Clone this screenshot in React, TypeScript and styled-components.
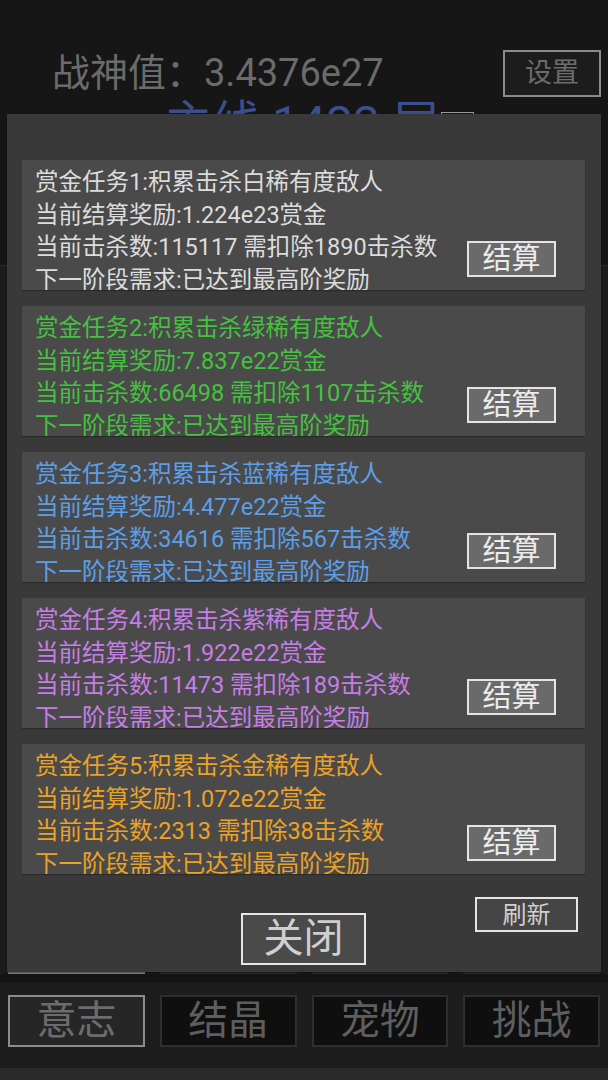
import React from "react";
import styled, { createGlobalStyle } from "styled-components";

const GlobalStyle = createGlobalStyle`
  html, body {
    margin: 0;
    padding: 0;
    background: #161616;
  }
  body {
    font-family: Roboto, "Noto Sans CJK SC", sans-serif;
  }
`;

type Task = {
  id: number;
  rarity: string;
  reward: string;
  kills: string;
  deduct: string;
  color: string;
};

const tasks: Task[] = [
  { id: 1, rarity: "白", reward: "1.224e23", kills: "115117", deduct: "1890", color: "#dcdcdc" },
  { id: 2, rarity: "绿", reward: "7.837e22", kills: "66498", deduct: "1107", color: "#45c13f" },
  { id: 3, rarity: "蓝", reward: "4.477e22", kills: "34616", deduct: "567", color: "#5c9fe8" },
  { id: 4, rarity: "紫", reward: "1.922e22", kills: "11473", deduct: "189", color: "#c67ee6" },
  { id: 5, rarity: "金", reward: "1.072e22", kills: "2313", deduct: "38", color: "#eba226" },
];

const tabs = ["意志", "结晶", "宠物", "挑战"];

const Screen = styled.div`
  position: relative;
  height: 1080px;
  display: flex;
  flex-direction: column;
  background: #161616;
  overflow: hidden;
`;

const Header = styled.div`
  display: flex;
  align-items: center;
  justify-content: space-between;
  padding: 50px 7px 0 52px;
  height: 47px;
`;

const Power = styled.div`
  font-size: 38px;
  color: #6b6b6b;
  line-height: 47px;
  white-space: nowrap;
`;

const SettingsButton = styled.div`
  width: 94px;
  height: 43px;
  border: 2px solid #8a8a8a;
  background: #1c1c1c;
  color: #6c6c6c;
  font-size: 27px;
  line-height: 1;
  display: flex;
  align-items: center;
  justify-content: center;
`;

const Floor = styled.div`
  display: flex;
  justify-content: center;
  align-items: flex-start;
  gap: 1px;
  font-size: 48px;
  line-height: 54px;
  color: #3b4f8f;
  padding-left: 30px;
`;

const SmallBox = styled.div`
  width: 31px;
  height: 30px;
  margin-top: 15px;
  border: 1px solid #9a9a9a;
`;

const Content = styled.div`
  flex: 1;
  margin-top: 114px;
  border-top: 1px solid #2a2a2a;
  background: #1c1c1c;
  display: flex;
  flex-direction: column;
  justify-content: flex-end;
`;

const TabRow = styled.div`
  display: grid;
  grid-template-columns: repeat(4, 1fr);
  gap: 15px;
  padding: 0 8px;
`;

const Tab = styled.div<{ $active?: boolean }>`
  height: 48px;
  border: 2px solid ${(p) => (p.$active ? "#8c8c8c" : "#2e2e2e")};
  background: ${(p) => (p.$active ? "#262626" : "#0f0f0f")};
  color: ${(p) => (p.$active ? "#6c6c6c" : "#5e5e5e")};
  font-size: 40px;
  line-height: 1;
  display: flex;
  align-items: center;
  justify-content: center;
`;

const Gap = styled.div`
  height: 8px;
  background: #141414;
`;

const NavBar = styled.div`
  background: #1d1d1d;
  padding: 13px 0 21px;
`;

const BottomStrip = styled.div`
  height: 12px;
  background: #2a2a2a;
`;

const Modal = styled.div`
  position: absolute;
  top: 114px;
  left: 7px;
  width: 594px;
  height: 858px;
  background: #393939;
  box-shadow: 0 1px 2px rgba(0, 0, 0, 0.5);
  display: flex;
  flex-direction: column;
  box-sizing: border-box;
  padding-top: 46px;
`;

const CardList = styled.div`
  display: flex;
  flex-direction: column;
  gap: 16px;
  padding: 0 16px 0 15px;
`;

const Card = styled.div<{ $color: string }>`
  height: 130px;
  box-sizing: border-box;
  background: #4a4a4a;
  padding: 6px 0 0 13px;
  overflow: hidden;
  display: flex;
  justify-content: space-between;
  color: ${(p) => p.$color};
  box-shadow: 0 1px 1px rgba(0, 0, 0, 0.25);
`;

const Lines = styled.div`
  font-size: 23.5px;
  line-height: 32.5px;
  white-space: nowrap;
`;

const SettleButton = styled.div`
  align-self: flex-end;
  margin: 0 29px 13px 0;
  width: 85px;
  height: 32px;
  border: 2px solid #e4e4e4;
  background: #6a6a6a;
  color: #ececec;
  font-size: 29px;
  line-height: 1;
  display: flex;
  align-items: center;
  justify-content: center;
  flex-shrink: 0;
`;

const Footer = styled.div`
  flex: 1;
  display: grid;
  grid-template-columns: 1fr auto 1fr;
  padding: 0 23px 7px 22px;
`;

const CloseButton = styled.div`
  grid-column: 2;
  align-self: end;
  width: 121px;
  height: 48px;
  border: 2px solid #e6e6e6;
  background: #4a4a4a;
  color: #cfcfcf;
  font-size: 40px;
  line-height: 1;
  display: flex;
  align-items: center;
  justify-content: center;
`;

const RefreshButton = styled.div`
  grid-column: 3;
  align-self: start;
  justify-self: end;
  margin-top: 23px;
  width: 99px;
  height: 31px;
  border: 2px solid #e4e4e4;
  background: #454545;
  color: #d0d0d0;
  font-size: 24px;
  line-height: 1;
  display: flex;
  align-items: center;
  justify-content: center;
`;

const App = () => {
  return (
    <>
      <GlobalStyle />
      <Screen>
        <Header>
          <Power>战神值：3.4376e27</Power>
          <SettingsButton>设置</SettingsButton>
        </Header>
        <Floor>
          <span>主线 1423 层</span>
          <SmallBox />
        </Floor>
        <Content>
          {/* row of buttons hidden under the dialog, only its bottom edge shows */}
          <TabRow>
            {tabs.map((t, i) => (
              <Tab key={t} $active={i === 0} />
            ))}
          </TabRow>
        </Content>
        <Gap />
        <NavBar>
          <TabRow>
            {tabs.map((t, i) => (
              <Tab key={t} $active={i === 0}>
                {t}
              </Tab>
            ))}
          </TabRow>
        </NavBar>
        <BottomStrip />

        <Modal>
          <CardList>
            {tasks.map((task) => (
              <Card key={task.id} $color={task.color}>
                <Lines>
                  <div>
                    赏金任务{task.id}:积累击杀{task.rarity}稀有度敌人
                  </div>
                  <div>当前结算奖励:{task.reward}赏金</div>
                  <div>
                    当前击杀数:{task.kills} 需扣除{task.deduct}击杀数
                  </div>
                  <div>下一阶段需求:已达到最高阶奖励</div>
                </Lines>
                <SettleButton>结算</SettleButton>
              </Card>
            ))}
          </CardList>
          <Footer>
            <CloseButton>关闭</CloseButton>
            <RefreshButton>刷新</RefreshButton>
          </Footer>
        </Modal>
      </Screen>
    </>
  );
};

export default App;
